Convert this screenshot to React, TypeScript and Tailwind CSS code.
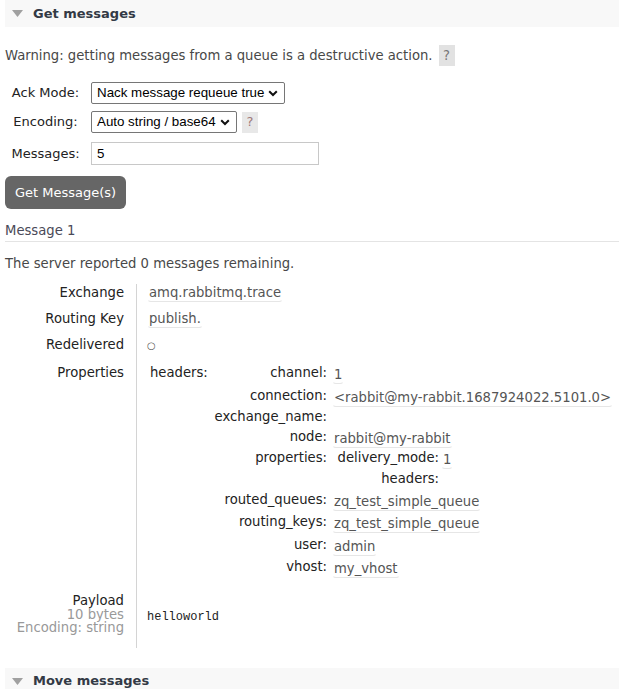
import React from "react";

const Chevron = () => (
  <svg width="10" height="7" viewBox="0 0 10 7" className="shrink-0">
    <path d="M1.2 1.2 L5 5 L8.8 1.2" fill="none" stroke="#111" strokeWidth="2" />
  </svg>
);

const Tri = () => (
  <svg width="11" height="7" viewBox="0 0 11 7" className="shrink-0">
    <path d="M0 0 L11 0 L5.5 7 Z" fill="#a0a0a0" />
  </svg>
);

const Val = ({ children }: { children: React.ReactNode }) => (
  <span className="inline-block px-[1px] leading-[16px] border border-transparent border-b-[#e6e6e6] rounded-[4px] text-[#555]">
    {children}
  </span>
);

type Row = { k: string; v?: React.ReactNode; h: number };

function KV({ rows, keyW, gap }: { rows: Row[]; keyW: number; gap: number }) {
  return (
    <div className="flex flex-col">
      {rows.map((r, i) => (
        <div key={i} className="flex items-start" style={{ height: r.h }}>
          <div className="text-right text-[#222] leading-[16px] shrink-0 whitespace-nowrap" style={{ width: keyW }}>
            {r.k}
          </div>
          <div className="pt-[1px]" style={{ paddingLeft: gap }}>
            {r.v}
          </div>
        </div>
      ))}
    </div>
  );
}

export default function App() {
  return (
    <div className="w-[619px] h-[689px] overflow-hidden bg-white text-[13.2px] text-[#484848] font-['DejaVu_Sans','Verdana',sans-serif]">
      {/* Header */}
      <div className="ml-[5px] h-[27px] bg-[#f8f8f8] flex items-center">
        <div className="ml-[7px]">
          <Tri />
        </div>
        <span className="ml-[10px] font-bold text-[13px] text-[#333a45]">Get messages</span>
      </div>

      {/* Warning */}
      <div className="mt-[18px] ml-[5px] h-[21px] flex items-center">
        <span className="leading-[16px]">Warning: getting messages from a queue is a destructive action.</span>
        <span className="ml-[6px] w-[16px] h-[21px] bg-[#e2e2e2] text-[#777] flex items-center justify-center">?</span>
      </div>

      {/* Form */}
      <div className="mt-[16px] ml-[5px] flex flex-col text-[#222]">
        <div className="flex items-center h-[22px]">
          <div className="w-[81px] text-center text-[13px]">Ack Mode:</div>
          <div className="ml-[5px] w-[194px] h-[22px] border border-[#767676] rounded-[2px] flex items-center justify-between pl-[5px] pr-[6px] text-[13.33px] text-black font-['Liberation_Sans',Arial,sans-serif]">
            <span>Nack message requeue true</span>
            <Chevron />
          </div>
        </div>
        <div className="flex items-center h-[22px] mt-[7px]">
          <div className="w-[81px] text-center text-[13px]">Encoding:</div>
          <div className="ml-[5px] w-[146px] h-[22px] border border-[#767676] rounded-[2px] flex items-center justify-between pl-[5px] pr-[6px] text-[13.33px] text-black font-['Liberation_Sans',Arial,sans-serif]">
            <span>Auto string / base64</span>
            <Chevron />
          </div>
          <span className="ml-[5px] w-[16px] h-[21px] bg-[#e8e8e8] text-[#a07a7a] text-[13px] flex items-center justify-center">?</span>
        </div>
        <div className="flex items-center h-[23px] mt-[9px]">
          <div className="w-[81px] text-center text-[13px]">Messages:</div>
          <div className="ml-[5px] w-[228px] h-[23px] border border-[#c8c8c8] flex items-center pl-[5px] text-[13.33px] text-black font-['Liberation_Sans',Arial,sans-serif]">
            5
          </div>
        </div>
      </div>

      {/* Button */}
      <div className="mt-[11px] ml-[5px]">
        <div className="w-[121px] h-[33px] rounded-[6px] bg-[#666666] text-white text-[13px] flex items-center justify-center">
          Get Message(s)
        </div>
      </div>

      {/* Message 1 */}
      <div className="mt-[14px] ml-[5px] pb-[2px] border-b border-[#e4e4e4] leading-[16px] text-[#4a4a58]">
        Message 1
      </div>

      <div className="mt-[14px] ml-[5px] leading-[16px]">
        The server reported 0 messages remaining.
      </div>

      {/* Detail table */}
      <div className="mt-[12px] grid grid-cols-[136px_1fr] leading-[16px]">
        <div className="text-right pr-[12px] text-[#222] pb-[8px] pt-[1px]">Exchange</div>
        <div className="border-l border-[#d4d4d4] pl-[10px] pb-[8px]">
          <Val>amq.rabbitmq.trace</Val>
        </div>

        <div className="text-right pr-[12px] text-[#222] pb-[8px] pt-[1px]">Routing Key</div>
        <div className="border-l border-[#d4d4d4] pl-[10px] pb-[8px]">
          <Val>publish.</Val>
        </div>

        <div className="text-right pr-[12px] text-[#222] pb-[10px] pt-[1px]">Redelivered</div>
        <div className="border-l border-[#d4d4d4] pl-[10px] pb-[10px] pt-[2px] text-[#555] text-[10px] leading-[15px]">○</div>

        <div className="text-right pr-[12px] text-[#222] pt-[2px]">Properties</div>
        <div className="border-l border-[#d4d4d4] pl-[13px] pt-[2px] flex items-start pb-[11px]">
          <div className="w-[52px] text-[#222] leading-[16px] whitespace-nowrap">headers:</div>
          <KV
            keyW={125}
            gap={5}
            rows={[
              { k: "channel:", v: <Val>1</Val>, h: 23 },
              { k: "connection:", v: <Val>&lt;rabbit@my-rabbit.1687924022.5101.0&gt;</Val>, h: 21 },
              { k: "exchange_name:", v: null, h: 20 },
              { k: "node:", v: <Val>rabbit@my-rabbit</Val>, h: 21 },
              {
                k: "properties:",
                v: (
                  <div className="-mt-[1px] -ml-[3px]">
                    <KV
                      keyW={110}
                      gap={2}
                      rows={[
                        { k: "delivery_mode:", v: <Val>1</Val>, h: 21 },
                        { k: "headers:", v: null, h: 21 },
                      ]}
                    />
                  </div>
                ),
                h: 42,
              },
              { k: "routed_queues:", v: <Val>zq_test_simple_queue</Val>, h: 22 },
              { k: "routing_keys:", v: <Val>zq_test_simple_queue</Val>, h: 23 },
              { k: "user:", v: <Val>admin</Val>, h: 22 },
              { k: "vhost:", v: <Val>my_vhost</Val>, h: 22 },
            ]}
          />
        </div>

        <div className="text-right pr-[12px] pt-[2px] pb-[13px] leading-[13.5px]">
          <div className="text-[#222]">Payload</div>
          <div className="text-[#999]">10 bytes</div>
          <div className="text-[#999]">Encoding: string</div>
        </div>
        <div className="border-l border-[#d4d4d4] pl-[10px] pt-[17px] pb-[12px] leading-[16px] font-['Liberation_Mono','Courier_New',monospace] text-[12px] text-[#222]">
          helloworld
        </div>
      </div>

      {/* Move messages header */}
      <div className="mt-[20px] ml-[5px] h-[27px] bg-[#f8f8f8] flex items-center">
        <div className="ml-[7px]">
          <Tri />
        </div>
        <span className="ml-[10px] font-bold text-[13px] text-[#333a45]">Move messages</span>
      </div>
    </div>
  );
}
